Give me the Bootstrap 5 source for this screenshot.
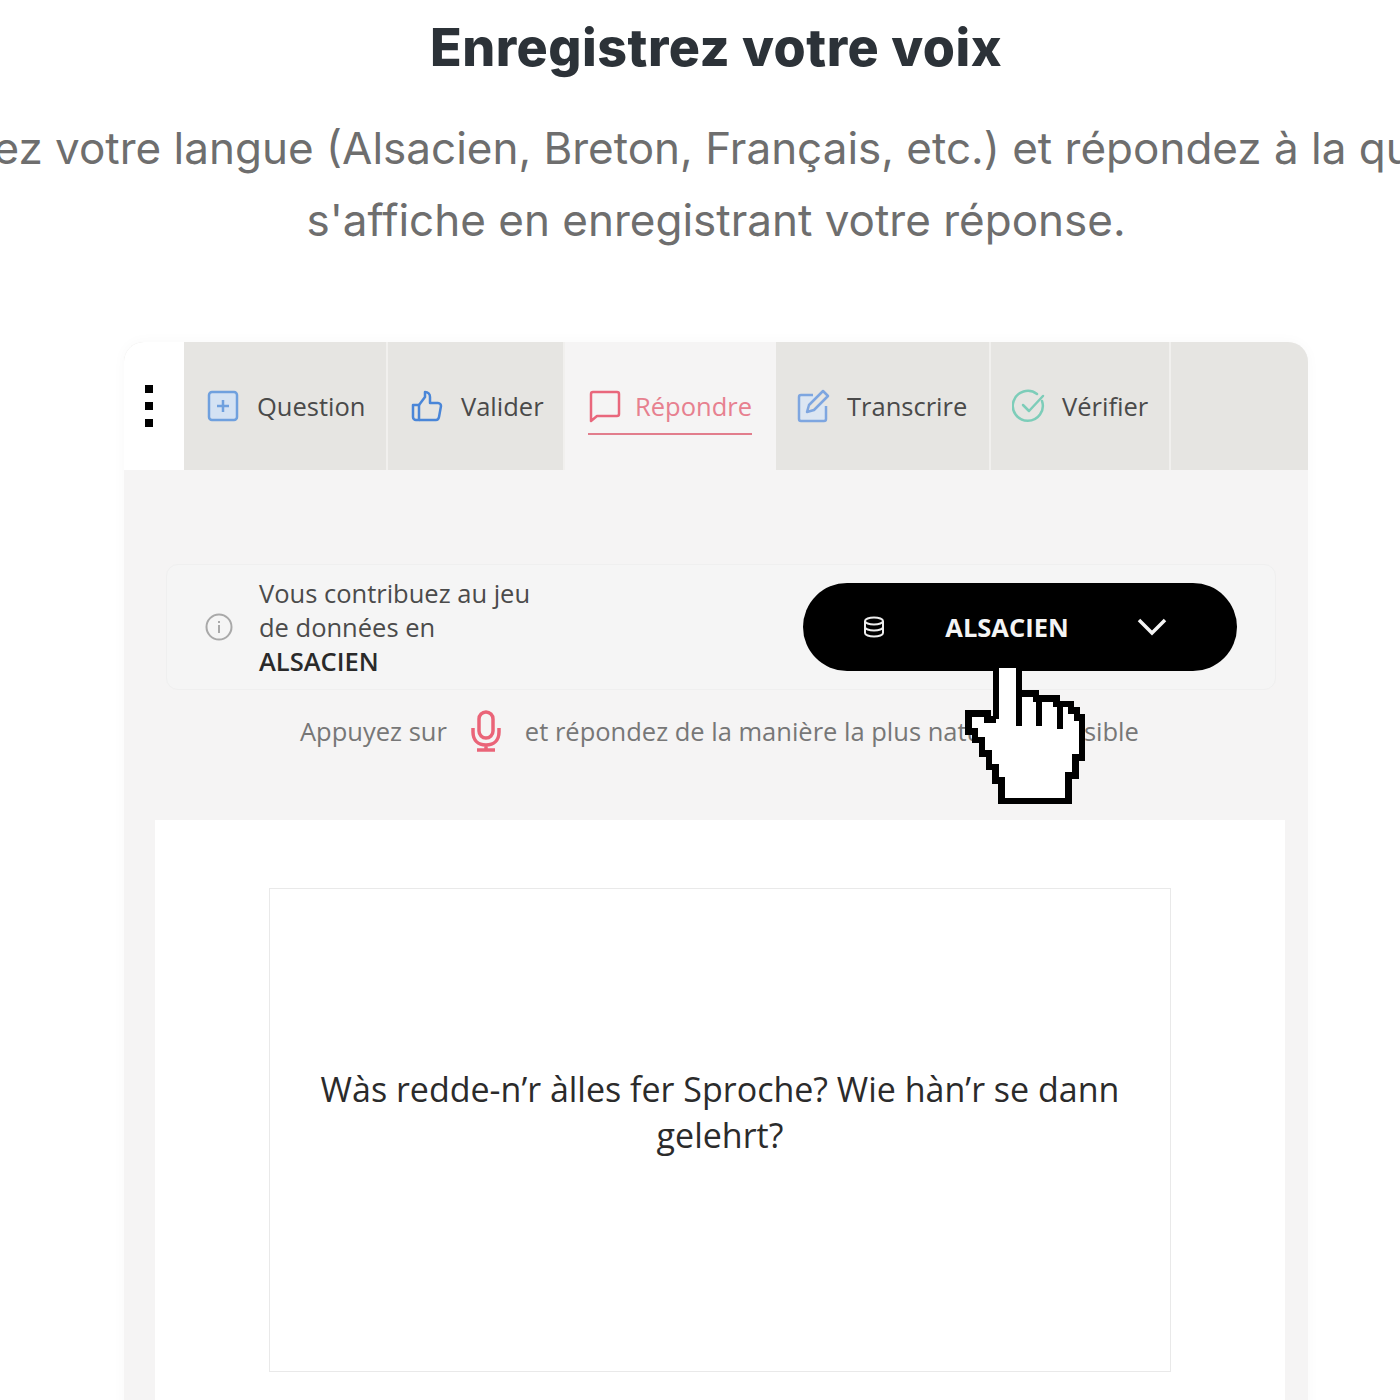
<!DOCTYPE html>
<html lang="fr">
  <head>
    <meta charset="UTF-8" />
    <meta name="viewport" content="width=device-width, initial-scale=1" />
    <title>Enregistrez votre voix</title>
    <link
      href="https://cdn.jsdelivr.net/npm/bootstrap@5.3.0/dist/css/bootstrap.min.css"
      rel="stylesheet"
    />
    <style>
      html,
      body {
        height: 1400px;
        overflow: hidden;
      }

      body {
        background: #fff;
        font-family: "Open Sans", sans-serif;
      }

      .intro {
        padding: 16px 0 0 32px;
        height: 342px;
        font-family: Inter, sans-serif;
      }

      .intro h1 {
        font-size: 52px;
        line-height: 64px;
        font-weight: 800;
        letter-spacing: 0.5px;
        color: #2c3238;
        margin: 0 0 32px;
      }

      .intro p {
        font-size: 44px;
        line-height: 72px;
        color: #6e6e6e;
        white-space: nowrap;
        margin: 0;
      }

      .app-frame {
        width: 1184px;
        margin-left: 124px;
        height: 1100px;
        background: #f5f4f4;
        border-radius: 20px 20px 0 0;
        box-shadow: 0 0 14px rgba(0, 0, 0, 0.03);
        position: relative;
      }

      .tab-row {
        height: 128px;
        background: #e6e5e2;
        border-radius: 20px 20px 0 0;
      }

      .tab-dots {
        width: 60px;
        background: #fff;
        border-top-left-radius: 20px;
        gap: 9px;
      }

      .tab-dots span {
        width: 8px;
        height: 8px;
        background: #000;
        margin-left: -10px;
      }

      .tab-item {
        font-size: 25.5px;
        color: #4a4a4a;
        border-right: 2px solid #f1f0ee;
        gap: 17px;
        padding-left: 22px;
      }

      .tab-item svg {
        width: 34px;
        height: 34px;
        flex: none;
      }

      .tab-question {
        width: 204px;
      }

      .tab-validate {
        width: 177px;
      }

      .tab-transcribe {
        width: 215px;
        padding-left: 20px;
      }

      .tab-verify {
        width: 180px;
        padding-left: 21px;
        gap: 16px;
      }

      .tab-active {
        width: 211px;
        padding-left: 23px;
        background: #f5f4f4;
        color: #e7808f;
        border-right: 0;
      }

      .tab-active .tab-inner {
        display: flex;
        align-items: center;
        gap: 13px;
        height: 56px;
        margin-top: 2px;
        border-bottom: 2px solid #e27d8c;
      }

      .lang-box {
        margin: 94px 32px 0 42px;
        height: 126px;
        border: 1px solid #efefef;
        border-radius: 12px;
        background: #f5f5f5;
        padding: 0 38px 0 38px;
      }

      .lang-text {
        font-size: 25.5px;
        line-height: 34px;
        color: #4b4b4b;
        margin-left: 26px;
      }

      .lang-text strong {
        font-weight: 600;
        color: #2a2a2a;
      }

      .lang-pill {
        width: 434px;
        height: 88px;
        background: #000;
        color: #f4f4f4;
        border-radius: 44px;
        font-size: 25.5px;
        font-weight: 700;
        padding: 0 70px 0 60px;
      }

      .lang-pill span {
        margin-right: 8px;
      }

      .hint-row {
        height: 82px;
        font-size: 25.5px;
        color: #777;
        padding-left: 176px;
        gap: 24px;
      }

      .answer-panel {
        margin: 48px 23px 0 31px;
        background: #fff;
        padding: 68px 114px;
        height: 700px;
      }

      .question-box {
        height: 484px;
        border: 1px solid #e9e9e9;
        font-size: 34px;
        line-height: 46px;
        color: #2b2b2b;
        padding: 0 40px 36px;
      }

      .hand-cursor {
        position: absolute;
        left: 841px;
        top: 318px;
        width: 122px;
        height: 146px;
        overflow: visible;
      }
    </style>
  </head>

  <body>
    <div class="intro d-flex flex-column align-items-center text-center">
      <h1>Enregistrez votre voix</h1>
      <p>
        Choisissez votre langue (Alsacien, Breton, Français, etc.) et répondez à la question qui<br />
        s'affiche en enregistrant votre réponse.
      </p>
    </div>

    <div class="app-frame">
      <div class="tab-row d-flex">
        <div class="tab-dots d-flex flex-column align-items-center justify-content-center">
          <span></span><span></span><span></span>
        </div>
        <div class="tab-item tab-question d-flex align-items-center">
          <svg viewBox="0 0 34 34" fill="none">
            <rect x="3" y="3" width="28" height="28" rx="3" fill="#d4e2f3" stroke="#6fa0de" stroke-width="2.5" />
            <path d="M17 11v12M11 17h12" stroke="#6fa0de" stroke-width="2.5" />
          </svg>
          Question
        </div>
        <div class="tab-item tab-validate d-flex align-items-center">
          <svg viewBox="0 0 34 34" fill="none" stroke="#4a86d8" stroke-width="2.5" stroke-linejoin="round">
            <path d="M3 16h6v15H6a3 3 0 0 1-3-3z" />
            <path d="M9 16l6-8V3c3 0 5 2 5 5v6h8c2 0 3 2 3 3l-2 11c-.4 2-1.500 3-3 3H9" />
          </svg>
          Valider
        </div>
        <div class="tab-item tab-active d-flex align-items-center">
          <div class="tab-inner">
            <svg viewBox="0 0 34 34" fill="none" stroke="#e9677c" stroke-width="2.500" stroke-linejoin="round">
              <path d="M3 5a2 2 0 0 1 2-2h24a2 2 0 0 1 2 2v20a2 2 0 0 1-2 2H9l-6 5z" />
            </svg>
            Répondre
          </div>
        </div>
        <div class="tab-item tab-transcribe d-flex align-items-center">
          <svg viewBox="0 0 34 34" fill="none" stroke="#7ea6e0" stroke-width="2.500" stroke-linejoin="round">
            <path d="M17 6H5a2 2 0 0 0-2 2v22a2 2 0 0 0 2 2h23a2 2 0 0 0 2-2V17" fill="#dce6f2" />
            <path d="M27 2l5 5-14 14-7 2 2-7z" fill="#e6e5e2" />
          </svg>
          Transcrire
        </div>
        <div class="tab-item tab-verify d-flex align-items-center">
          <svg viewBox="0 0 34 34" fill="none" stroke="#7dcdb9" stroke-width="2.500" stroke-linecap="round" stroke-linejoin="round">
            <path d="M30 12a15 15 0 1 1-5-7" />
            <path d="M11 16l6 6 14-15" />
          </svg>
          Vérifier
        </div>
        <div class="flex-grow-1"></div>
      </div>

      <div class="lang-box d-flex align-items-center">
        <svg width="28" height="28" viewBox="0 0 28 28" fill="none">
          <circle cx="14" cy="14" r="12.500" stroke="#a9a9a9" stroke-width="2" />
          <path d="M14 8v2M14 12v8" stroke="#a9a9a9" stroke-width="2" />
        </svg>
        <div class="lang-text">
          Vous contribuez au jeu<br />
          de données en<br />
          <strong>ALSACIEN</strong>
        </div>
        <div class="lang-pill d-flex align-items-center justify-content-between ms-auto">
          <svg width="22" height="22" viewBox="0 0 22 22" fill="none" stroke="#eee" stroke-width="2">
            <ellipse cx="11" cy="5" rx="9" ry="3.500" />
            <path d="M2 5v12c0 2 4 3.500 9 3.500s9-1.500 9-3.500V5M2 11c0 2 4 3.500 9 3.500s9-1.500 9-3.500" />
          </svg>
          <span>ALSACIEN</span>
          <svg width="30" height="18" viewBox="0 0 30 18" fill="none" stroke="#f4f4f4" stroke-width="3.500">
            <path d="M2 2l13 13L28 2" />
          </svg>
        </div>
      </div>

      <div class="hint-row d-flex align-items-center">
        <span>Appuyez sur</span>
        <svg width="30" height="42" viewBox="0 0 30 42" fill="none" stroke="#ea6478" stroke-width="3.500">
          <rect x="8" y="2" width="14" height="26" rx="7" />
          <path d="M2 18v4c0 8 5 13 13 13s13-5 13-13v-4M15 35v5M6 40h18" />
        </svg>
        <span>et répondez de la manière la plus naturelle possible</span>
      </div>

      <div class="answer-panel">
        <div class="question-box d-flex align-items-center justify-content-center text-center">
          Wàs redde-n’r àlles fer Sproche? Wie hàn’r se dann gelehrt?
        </div>
      </div>

      <svg class="hand-cursor" viewBox="0 0 18 21" shape-rendering="crispEdges">
        <path
          d="M4.600 8.500V.4H8V4.700H10.500V5.400H13.500V6.200H15.600V7.200H16.500V8.200H17.300V14.100H16.300V16.800H15.300V20.500H5.400V17.500H4.500V15.500H3.500V13.500H2.500V11.500H1.500V10.300H.5V7.600H3.300V8.500H4.600"
          fill="#fff"
          stroke="#000"
          stroke-width="0.95"
        />
        <path d="M8 4.700V9.400M10.900 5.400V9.400M14 6.200V9.900" fill="none" stroke="#000" stroke-width="0.95" />
      </svg>
    </div>

    <script src="https://cdn.jsdelivr.net/npm/bootstrap@5.3.0/dist/js/bootstrap.bundle.min.js"></script>
  </body>
</html>
